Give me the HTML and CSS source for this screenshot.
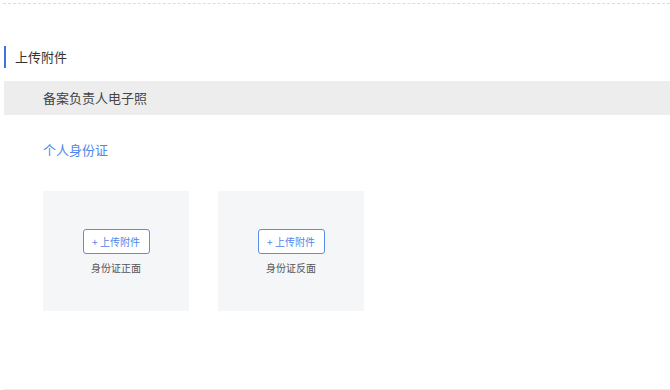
FILE: index.html
```html
<!DOCTYPE html>
<html lang="zh-CN">
<head>
    <meta charset="UTF-8">
    <title>上传附件</title>
    <link rel="stylesheet" href="styles.css">
</head>
<body>
    <div class="page">
        <div class="section-title">上传附件</div>
        <div class="group-bar">备案负责人电子照</div>
        <div class="sub-title">个人身份证</div>
        <div class="upload-list">
            <div class="upload-card">
                <button class="upload-btn">+ 上传附件</button>
                <div class="upload-label">身份证正面</div>
            </div>
            <div class="upload-card">
                <button class="upload-btn">+ 上传附件</button>
                <div class="upload-label">身份证反面</div>
            </div>
        </div>
    </div>
</body>
</html>
```

FILE: styles.css
```css
body {
    margin: 0;
    font-family: "Noto Sans CJK SC", "Noto Sans", sans-serif;
    color: #333;
    background: #fff;
}
.page {
    margin: 3px 0 0 3px;
    border-top: 1px dashed #dcdcdc;
    border-bottom: 1px solid #ececec;
    height: 387px;
    box-sizing: border-box;
}
.section-title {
    margin: 42px 0 0 1px;
    padding-left: 9px;
    border-left: 2px solid #3f73e0;
    height: 22px;
    line-height: 22px;
    font-size: 13px;
    color: #333;
}
.group-bar {
    margin: 13px 0 0 1px;
    height: 34px;
    line-height: 34px;
    padding-left: 39px;
    background: #ededed;
    font-size: 13px;
    color: #444;
}
.sub-title {
    margin: 24px 0 0 40px;
    font-size: 13px;
    line-height: 22px;
    color: #4f86e8;
}
.upload-list {
    display: flex;
    gap: 29px;
    margin: 30px 0 0 40px;
}
.upload-card {
    width: 146px;
    height: 120px;
    background: #f5f6f8;
    display: flex;
    flex-direction: column;
    align-items: center;
    justify-content: center;
    padding-top: 2px;
    box-sizing: border-box;
}
.upload-btn {
    width: 67px;
    height: 25px;
    padding: 0;
    border: 1px solid #5b8cec;
    border-radius: 3px;
    background: #fff;
    color: #4f86e8;
    font-family: inherit;
    font-size: 10px;
    cursor: pointer;
}
.upload-label {
    margin-top: 7px;
    font-size: 10px;
    line-height: 14px;
    color: #555;
}
```
